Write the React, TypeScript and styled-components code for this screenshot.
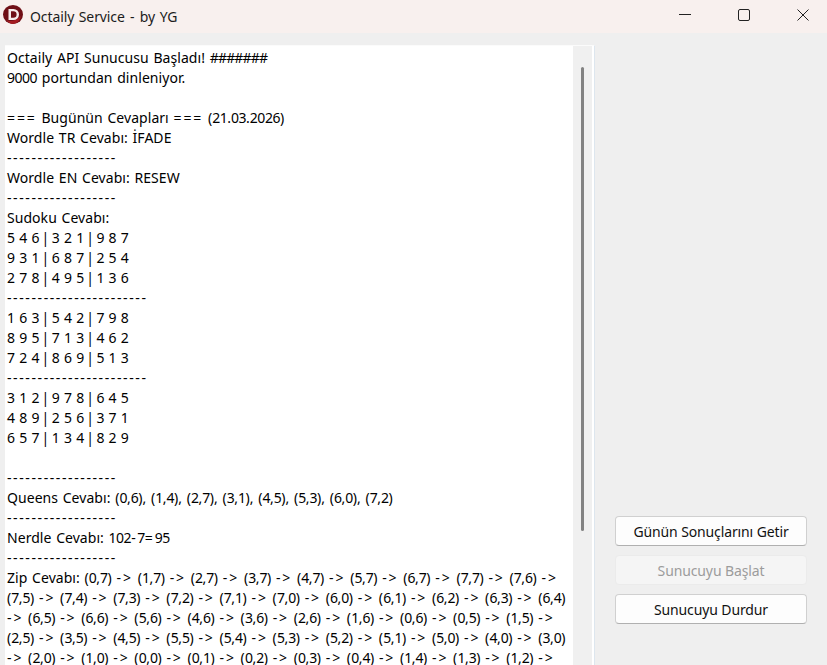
import React from "react";
import styled, { createGlobalStyle } from "styled-components";

const GlobalStyle = createGlobalStyle`
  html, body {
    margin: 0;
    padding: 0;
    background: #efefef;
    overflow: hidden;
  }
`;

const Window = styled.div`
  width: 827px;
  height: 665px;
  display: flex;
  flex-direction: column;
  overflow: hidden;
  font-family: "Noto Sans", "Open Sans", sans-serif;
  color: #000;
`;

const TitleBar = styled.div`
  height: 33px;
  flex: none;
  display: flex;
  align-items: center;
  background: #f8f0ee;
  padding-left: 3px;
`;

const LogoMark = styled.svg`
  margin-bottom: 4px;
`;

const AppTitle = styled.span`
  margin-left: 7px;
  font-size: 14px;
  letter-spacing: -0.1px;
  word-spacing: 1px;
  color: #1c1c1c;
`;

const TitleDash = styled.span`
  margin: 0 0.8px;
`;

const WinButtons = styled.div`
  margin-left: auto;
  align-self: flex-start;
  display: flex;
  gap: 11px;
`;

const WinButton = styled.div`
  width: 48px;
  height: 30px;
  display: flex;
  align-items: center;
  justify-content: center;
`;

const Body = styled.div`
  flex: 1;
  min-height: 0;
  display: flex;
  padding: 12px 0 0 5px;
`;

const LogPanel = styled.div`
  width: 590px;
  flex: none;
  display: flex;
  box-sizing: border-box;
  background: #fff;
  border-right: 1px solid #dde6ee;
  border-top: 1px solid #fbfbfb;
`;

const LogText = styled.div`
  width: 568px;
  flex: none;
  padding: 2px 0 0 2px;
  box-sizing: border-box;
  font-size: 14px;
  line-height: 20px;
  letter-spacing: 0.05px;
  word-spacing: 1px;
  white-space: pre;
  overflow: hidden;
`;

const Line = styled.div`
  height: 20px;
`;

const Dash = styled.span`
  letter-spacing: 1.6px;
`;

const Arrow = styled.span`
  letter-spacing: 1.95px;
`;

const Op = styled.span`
  letter-spacing: 1.9px;
`;

const Digits = styled.span`
  letter-spacing: -0.5px;
`;

const Comma = styled.span`
  letter-spacing: 0;
`;

const Bar = styled.span`
  margin-left: -2.2px;
  letter-spacing: -2.2px;
`;

const Hash = styled.span`
  letter-spacing: -0.8px;
`;

const ScrollTrack = styled.div`
  width: 20px;
  flex: none;
  box-sizing: border-box;
  background: #f0f0f0;
  border-right: 1px solid #fff;
  padding-top: 21px;
`;

const ScrollThumb = styled.div`
  width: 3px;
  height: 464px;
  margin-left: 8px;
  border-radius: 2px;
  background: #828282;
`;

const Side = styled.div`
  flex: 1;
  display: flex;
  flex-direction: column;
  gap: 9px;
  padding: 471px 20px 0 20px;
`;

const ActionButton = styled.button`
  height: 30px;
  box-sizing: border-box;
  padding: 0;
  border-radius: 4px;
  border: 1px solid ${(p) => (p.disabled ? "#ebebeb" : "#d0d0d0")};
  border-bottom-color: ${(p) => (p.disabled ? "#ebebeb" : "#b0b0b0")};
  background: ${(p) => (p.disabled ? "#f5f5f5" : "#fdfdfd")};
  color: ${(p) => (p.disabled ? "#9c9c9c" : "#111")};
  font-family: inherit;
  font-size: 14px;
  letter-spacing: -0.12px;
`;

const lines = [
  "Octaily API Sunucusu Başladı! #######",
  "9000 portundan dinleniyor.",
  "",
  "=== Bugünün Cevapları === (21.03.2026)",
  "Wordle TR Cevabı: İFADE",
  "------------------",
  "Wordle EN Cevabı: RESEW",
  "------------------",
  "Sudoku Cevabı:",
  "5 4 6 | 3 2 1 | 9 8 7",
  "9 3 1 | 6 8 7 | 2 5 4",
  "2 7 8 | 4 9 5 | 1 3 6",
  "-----------------------",
  "1 6 3 | 5 4 2 | 7 9 8",
  "8 9 5 | 7 1 3 | 4 6 2",
  "7 2 4 | 8 6 9 | 5 1 3",
  "-----------------------",
  "3 1 2 | 9 7 8 | 6 4 5",
  "4 8 9 | 2 5 6 | 3 7 1",
  "6 5 7 | 1 3 4 | 8 2 9",
  "",
  "------------------",
  "Queens Cevabı: (0,6), (1,4), (2,7), (3,1), (4,5), (5,3), (6,0), (7,2)",
  "------------------",
  "Nerdle Cevabı: 102-7=95",
  "------------------",
  "Zip Cevabı: (0,7) -> (1,7) -> (2,7) -> (3,7) -> (4,7) -> (5,7) -> (6,7) -> (7,7) -> (7,6) ->",
  "(7,5) -> (7,4) -> (7,3) -> (7,2) -> (7,1) -> (7,0) -> (6,0) -> (6,1) -> (6,2) -> (6,3) -> (6,4)",
  "-> (6,5) -> (6,6) -> (5,6) -> (4,6) -> (3,6) -> (2,6) -> (1,6) -> (0,6) -> (0,5) -> (1,5) ->",
  "(2,5) -> (3,5) -> (4,5) -> (5,5) -> (5,4) -> (5,3) -> (5,2) -> (5,1) -> (5,0) -> (4,0) -> (3,0)",
  "-> (2,0) -> (1,0) -> (0,0) -> (0,1) -> (0,2) -> (0,3) -> (0,4) -> (1,4) -> (1,3) -> (1,2) ->",
];

// Noto's symbols have other widths than the reference font, so each kind gets its own spacing
function spaced(text: string) {
  return text.split(/(->|-+|=+|\d+|,|\||#+)/).map((part, i) => {
    if (part === "->") return <Arrow key={i}>{part}</Arrow>;
    if (/^-/.test(part)) return <Dash key={i}>{part}</Dash>;
    if (/^=/.test(part)) return <Op key={i}>{part}</Op>;
    if (/^\d/.test(part)) return <Digits key={i}>{part}</Digits>;
    if (part === ",") return <Comma key={i}>{part}</Comma>;
    if (part === "|") return <Bar key={i}>{part}</Bar>;
    if (/^#/.test(part)) return <Hash key={i}>{part}</Hash>;
    return part;
  });
}

function Logo() {
  return (
    <LogoMark width="20" height="19" viewBox="0 0 20 19">
      <ellipse cx="10" cy="9.5" rx="10" ry="9.5" fill="#6f0f16" />
      <path d="M3 15c4 2 10 1 15-4-1 5-5 8-8 8-3 0-5-2-7-4z" fill="#a51c22" />
      <path
        fillRule="evenodd"
        d="M5.5 4h5a5.5 5.5 0 0 1 0 11h-5zM8 6.2v6.6h2.3a3.3 3.3 0 0 0 0-6.6z"
        fill="#f6ecec"
      />
    </LogoMark>
  );
}

export default function App() {
  return (
    <>
      <GlobalStyle />
      <Window>
        <TitleBar>
          <Logo />
          <AppTitle>
            Octaily Service <TitleDash>-</TitleDash> by YG
          </AppTitle>
          <WinButtons>
            <WinButton>
              <svg width="12" height="12" viewBox="0 0 12 12">
                <path d="M0 5.5h12" stroke="#222" fill="none" />
              </svg>
            </WinButton>
            <WinButton>
              <svg width="12" height="12" viewBox="0 0 12 12">
                <rect x="0.5" y="0.5" width="11" height="11" rx="1.5" stroke="#222" fill="none" />
              </svg>
            </WinButton>
            <WinButton>
              <svg width="12" height="12" viewBox="0 0 12 12">
                <path d="M0.5 0.5l11 11M11.5 0.5l-11 11" stroke="#222" fill="none" />
              </svg>
            </WinButton>
          </WinButtons>
        </TitleBar>
        <Body>
          <LogPanel>
            <LogText>
              {lines.map((line, i) => (
                <Line key={i}>{spaced(line)}</Line>
              ))}
            </LogText>
            <ScrollTrack>
              <ScrollThumb />
            </ScrollTrack>
          </LogPanel>
          <Side>
            <ActionButton>Günün Sonuçlarını Getir</ActionButton>
            <ActionButton disabled>Sunucuyu Başlat</ActionButton>
            <ActionButton>Sunucuyu Durdur</ActionButton>
          </Side>
        </Body>
      </Window>
    </>
  );
}
